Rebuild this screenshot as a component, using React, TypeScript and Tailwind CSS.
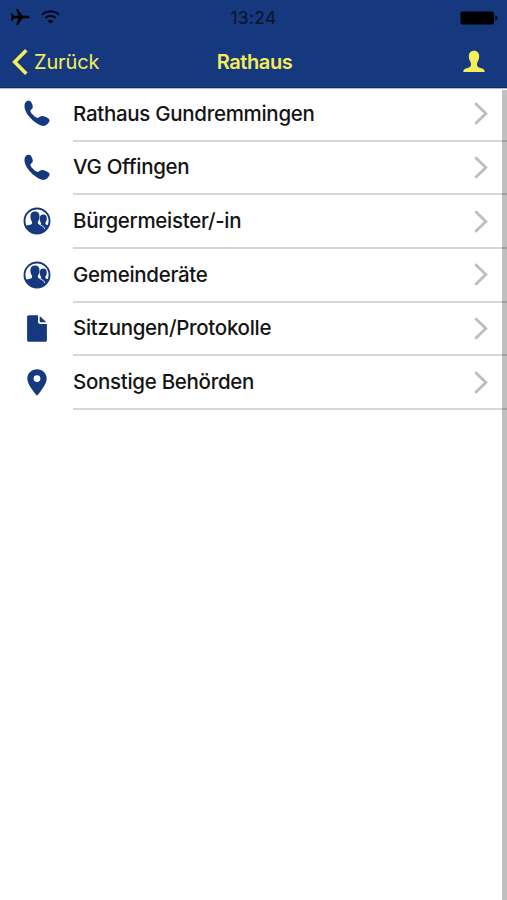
import type { ReactNode } from "react";

const PhoneIcon = () => (
  <svg className="-ml-px h-[27px] w-[27px]" viewBox="0 0 27 27" fill="currentColor">
    <path d="M1.500 5.200C1.700 3.200 2.800 1.500 4.200 1c1.500-.5 3.200 0 4 1.200 1 1.500 1.700 3.300 1.600 5-.1 1.500-1.900 2-2.300 3.300-.3 1.200.7 2.400 1.700 3.500 1.400 1.600 2.900 2.900 4.600 3.800 1.300.5 2.100-.5 3.300-1.200 1.200-.7 2.400-.7 3.700-.3 1.700.5 3.700 1.300 5 2.500.9.900.9 2 .4 3-1 1.900-2.700 3.400-4.700 4-1.900.4-3.900-.3-5.700-1.300-3-1.600-5.400-3.400-7.600-5.700-2.100-2.200-3.800-4.200-5-6.600-1.200-2.400-1.900-4.700-1.700-7z" />
  </svg>
);

const GroupIcon = () => (
  <svg className="h-[28px] w-[28px]" viewBox="0 0 28 28">
    <circle cx="14" cy="14" r="12.500" fill="none" stroke="currentColor" strokeWidth="1.900" />
    <path
      fill="currentColor"
      d="M20.300 7.500c2.400 0 3.500 1.600 3.500 3.900 0 1.900-.6 3.200-1.300 4.200-.4.700-.2 1.500.4 1.800.7.400 1.700.600 2.700.9-1 2.700-2.500 4.900-4.700 6.300l-6-6.300c1.400-.2 2.500-.5 3-1.100.4-.5.300-1.200-.1-1.800-.7-1-1.100-2.300-1.100-4 0-2.300 1.200-3.900 3.600-3.900z"
    />
    <path
      fill="currentColor"
      d="M12 4.500c3.100 0 4.600 2 4.500 4.900 0 2.200-.6 3.700-1.400 4.900-.5.900-.3 2.300.3 2.800 1.300 1 3.800 1.500 4.900 2.800.8.900 1.200 2.500 1.400 4.100C16.500 27.900 7.500 27.500 2.800 20.800c-.4-.6-.7-1.300-.9-2 2.300-.5 5.600-.8 6.700-1.800.6-.6.700-1.800.2-2.700-.8-1.200-1.400-2.700-1.400-4.900-.1-2.900 1.500-4.900 4.600-4.900z"
    />
    <path d="M16.700 17.600c2.300.8 4.100 1.900 5 4.300" fill="none" stroke="white" strokeWidth="1" />
  </svg>
);

const FileIcon = () => (
  <svg className="h-[27px] w-[20px]" viewBox="0 0 20 27" fill="currentColor">
    <path d="M2 .3h9v6.400c0 1.400.8 2.200 2.200 2.200h6.700v16c0 1.200-.8 1.900-1.900 1.900H2C.8 26.800.1 26.100.1 24.900V2.200C.1 1 .8.300 2 .3z" />
    <path d="M12.700.9l6.700 6.300h-5.500c-.8 0-1.200-.4-1.200-1.200z" />
  </svg>
);

const PinIcon = () => (
  <svg className="h-[27px] w-[20px]" viewBox="0 0 20 27" fill="currentColor">
    <path
      fillRule="evenodd"
      d="M10 .2c5.500 0 9.700 4.100 9.700 9.300 0 5.800-6 12.500-9.700 17.300C6.300 22 .3 15.300.3 9.500.3 4.300 4.500.2 10 .2zm0 6a3.400 3.400 0 100 6.800 3.400 3.400 0 000-6.800z"
    />
  </svg>
);

const ChevronIcon = () => (
  <svg
    className="h-[23px] w-[14px]"
    viewBox="0 0 14 23"
    fill="none"
    stroke="#bdbdbd"
    strokeWidth="2.800"
  >
    <path d="M1.300 1.300L11.800 11.500 1.300 21.700" />
  </svg>
);

type Row = { label: string; icon: ReactNode };

const rows: Row[] = [
  { label: "Rathaus Gundremmingen", icon: <PhoneIcon /> },
  { label: "VG Offingen", icon: <PhoneIcon /> },
  { label: "Bürgermeister/-in", icon: <GroupIcon /> },
  { label: "Gemeinderäte", icon: <GroupIcon /> },
  { label: "Sitzungen/Protokolle", icon: <FileIcon /> },
  { label: "Sonstige Behörden", icon: <PinIcon /> },
];

function StatusBar() {
  return (
    <div className="grid h-9 grid-cols-3 items-center px-[10px] text-black">
      <div className="flex items-center gap-[11px]">
        <svg className="-mt-[2px] h-[18px] w-5" viewBox="0 0 20 18" fill="currentColor">
          <path d="M19.700 9c0 .8-1.300 1.300-2.800 1.300h-4.300L7.800 17H6.200l2.200-6.700H4.100L2.200 12.800H.9L1.800 9 .9 5.200h1.300l1.900 2.500h4.300L6.200 1h1.600l4.800 6.700h4.300c1.500 0 2.800.5 2.800 1.300z" />
        </svg>
        <svg className="-mt-[2px] h-[14px] w-[19px]" viewBox="0 0 19 14" fill="none" stroke="currentColor" strokeWidth="1.700">
          <path d="M1 4.700c4.700-4.500 12.300-4.500 17 0M4.200 8c3-2.800 7.600-2.800 10.600 0" />
          <path d="M9.500 13.700L6.800 11c1.500-1.300 3.900-1.300 5.400 0z" fill="currentColor" stroke="none" />
        </svg>
      </div>
      <span className="text-center text-[17.500px] leading-none tracking-[0.3px] text-[#0a1226]">13:24</span>
      <svg className="-mr-px h-[14px] w-[38px] justify-self-end" viewBox="0 0 38 14" fill="currentColor">
        <rect x="0.500" y="0.500" width="33.500" height="13" rx="2" />
        <path d="M35.300 4.500c2.700.6 2.700 4.400 0 5z" />
      </svg>
    </div>
  );
}

function NavBar() {
  return (
    <div className="grid grow grid-cols-3 items-center px-3 pb-px text-[#f5ee5a]">
      <div className="flex items-center gap-[6px]">
        <svg className="h-[26px] w-4" viewBox="0 0 16 26" fill="none" stroke="currentColor" strokeWidth="3.600">
          <path d="M14.300 1.300L2.700 13l11.600 11.700" />
        </svg>
        <span className="text-[20px] leading-none tracking-[-0.15px]">Zurück</span>
      </div>
      <h1 className="pl-[2px] text-center text-[20px] font-semibold leading-none tracking-[-0.4px]">Rathaus</h1>
      <svg className="mr-[10px] h-[23px] w-[22px] justify-self-end" viewBox="0 0 23 23" fill="currentColor">
        <path d="M11.500.3c3.800 0 5.500 2.600 5.400 6 0 2.300-.8 4.200-1.700 5.700-.6 1-.9 3.700.1 4.700 1.400 1.500 4.700 1.700 6.200 3 .8.700 1.100 1.600 1.200 2.800H.3c.1-1.200.4-2.100 1.200-2.800 1.500-1.300 4.800-1.500 6.200-3 1-1 .7-3.700.1-4.700-.9-1.500-1.700-3.400-1.700-5.700-.1-3.400 1.600-6 5.400-6z" />
      </svg>
    </div>
  );
}

export default function App() {
  return (
    <div className="flex h-[900px] w-[507px] flex-col overflow-hidden bg-white font-['Inter','Liberation_Sans',sans-serif]">
      <header className="flex h-[89px] shrink-0 flex-col border-b border-[#a9bbd6] bg-[#15387f] shadow-[inset_0_-1px_0_#0d2a6b]">
        <StatusBar />
        <NavBar />
      </header>
      <main className="relative grow">
        <ul className="-mt-px">
          {rows.map((row) => (
            <li key={row.label} className="flex h-[53.7px]">
              <span className="flex w-[74px] items-center justify-center pb-[2px] text-[#15387f]">{row.icon}</span>
              <div className="-ml-px flex grow items-center justify-between border-b-2 border-[#d6d6d6] pr-[19px]">
                <span className="text-[20.500px] font-medium leading-none tracking-[-0.3px] text-[#141414]">
                  {row.label}
                </span>
                <ChevronIcon />
              </div>
            </li>
          ))}
        </ul>
        <div className="absolute bottom-0 right-0 top-px w-[5px] bg-black/25" />
      </main>
    </div>
  );
}
